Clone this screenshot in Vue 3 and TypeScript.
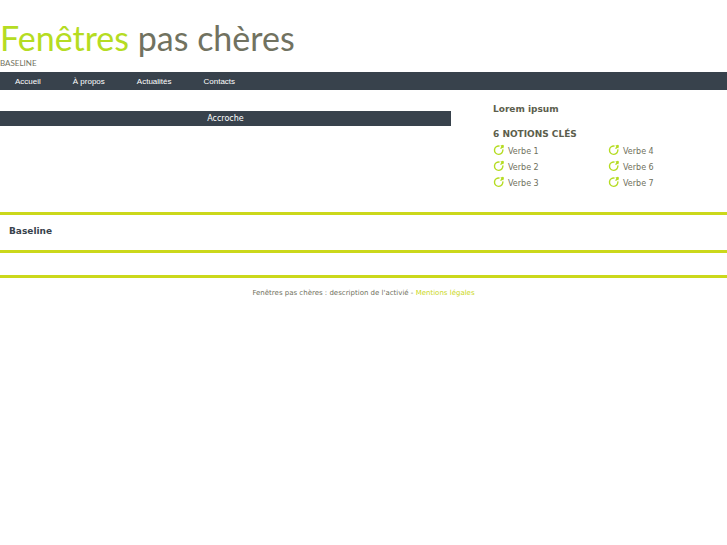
<script setup lang="ts">
interface NavLink {
  label: string
  href: string
}

const links: NavLink[] = [
  { label: 'Accueil', href: '#accueil' },
  { label: 'À propos', href: '#a-propos' },
  { label: 'Actualités', href: '#actualites' },
  { label: 'Contacts', href: '#contacts' },
]

const notions: string[] = ['Verbe 1', 'Verbe 4', 'Verbe 2', 'Verbe 6', 'Verbe 3', 'Verbe 7']
</script>

<template>
  <div class="page">
    <header class="header">
      <h1 class="logo"><span class="logo-accent">Fenêtres</span> pas chères</h1>
      <p class="tagline">BASELINE</p>
    </header>

    <nav class="nav">
      <a v-for="link in links" :key="link.href" :href="link.href">{{ link.label }}</a>
    </nav>

    <main class="main">
      <section class="hero">
        <h2 class="hook">Accroche</h2>
      </section>
      <aside class="aside">
        <h2 class="title">Lorem ipsum</h2>
        <h3 class="title">6 NOTIONS CLÉS</h3>
        <ul class="notions">
          <li v-for="notion in notions" :key="notion">
            <svg class="icon" viewBox="0 0 12 12" aria-hidden="true">
              <path d="M6.6 2.1A4.2 4.2 0 1 0 9.8 5.4" fill="none" stroke="#b5dc22" stroke-width="1.4" />
              <path d="M7.4 1.6 10 .8 11 1.8 10.4 4.2 9.4 3.9 7.9 5.1 7.1 4.3 8.3 2.8Z" fill="#b5dc22" />
            </svg>
            <span>{{ notion }}</span>
          </li>
        </ul>
      </aside>
    </main>

    <section class="baseline">
      <h2>Baseline</h2>
    </section>

    <footer class="footer">
      Fenêtres pas chères : description de l'activié - <a href="#mentions">Mentions légales</a>
    </footer>
  </div>
</template>

<style>
body {
  margin: 0;
  background: #fff;
}
</style>

<style scoped>
.page {
  font-family: 'DejaVu Sans', sans-serif;
  font-size: 8px;
  line-height: 16px;
  color: #6f705c;
}

h1,
h2,
h3,
p,
ul {
  margin: 0;
  padding: 0;
}

.header {
  padding-top: 17px;
  font-family: Lato, 'Open Sans', sans-serif;
  color: #717260;
}

.logo {
  font-size: 34px;
  font-weight: 400;
  line-height: 41px;
  white-space: nowrap;
}

.logo-accent {
  color: #b5dc22;
}

.tagline {
  font-size: 8px;
  line-height: 10px;
  padding-bottom: 4px;
}

.nav {
  display: flex;
  gap: 32px;
  padding: 1px 15px 0;
  background: #38424c;
  font-family: 'Liberation Sans', Arial, sans-serif;
  line-height: 17px;
}

.nav a {
  color: #fff;
  text-decoration: none;
}

.main {
  display: grid;
  grid-template-columns: 451fr 234fr;
  column-gap: 42px;
  padding: 11px 0 20px;
}

.hero {
  padding-top: 10px;
}

.hook {
  background: #38424c;
  color: #fff;
  font-size: 8px;
  font-weight: 400;
  line-height: 15px;
  text-align: center;
}

.title {
  padding-bottom: 9px;
  color: #5c5e4c;
  font-size: 9px;
  font-weight: 700;
  line-height: 16px;
}

h3.title {
  padding-bottom: 2px;
}

.notions {
  display: grid;
  grid-template-columns: 1fr 1fr;
  padding-right: 4px;
  list-style: none;
}

.notions li {
  display: flex;
  gap: 3px;
}

.icon {
  width: 12px;
  height: 12px;
}

.baseline {
  padding: 8px 9px 11px;
  border-top: 3px solid #cbd81b;
  border-bottom: 3px solid #cbd81b;
}

.baseline h2 {
  color: #38424c;
  font-size: 9px;
  line-height: 16px;
}

.footer {
  margin-top: 22px;
  padding-top: 7px;
  border-top: 3px solid #cbd81b;
  font-size: 7px;
  text-align: center;
}

.footer a {
  color: #cbd81b;
  text-decoration: none;
}
</style>
